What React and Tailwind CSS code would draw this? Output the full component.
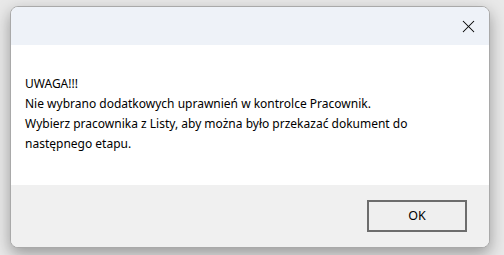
import { X } from 'lucide-react'

export default function App() {
  return (
    <div className="w-[504px] h-[255px] bg-[#e9e9e9] overflow-hidden pt-[6px] pl-[10px]" style={{ fontFamily: '"Noto Sans", "Open Sans", sans-serif' }}>
      <div className="w-[480px] h-[242px] rounded-[8px] border border-[#a9a9a9] overflow-hidden flex flex-col bg-white shadow-[0_6px_16px_rgba(0,0,0,0.35)]">
        <div className="h-[38px] shrink-0 bg-[#eef2f8] flex items-center justify-end pr-[10px]">
          <X size={21} strokeWidth={1.15} className="text-black" />
        </div>
        <div className="flex-1 bg-white pl-[14px] pt-[29px] text-[12px] leading-[20px] text-black">
          <p>UWAGA!!!</p>
          <p>Nie wybrano dodatkowych uprawnień w kontrolce Pracownik.</p>
          <p>Wybierz pracownika z Listy, aby można było przekazać dokument do</p>
          <p>następnego etapu.</p>
        </div>
        <div className="h-[62px] shrink-0 bg-[#f0f0f0] flex justify-end pt-[15px] pr-[22px]">
          <button className="w-[100px] h-[32px] border-2 border-[#6d6d6d] bg-[#efefef] text-[12.5px] text-black">OK</button>
        </div>
      </div>
    </div>
  )
}
